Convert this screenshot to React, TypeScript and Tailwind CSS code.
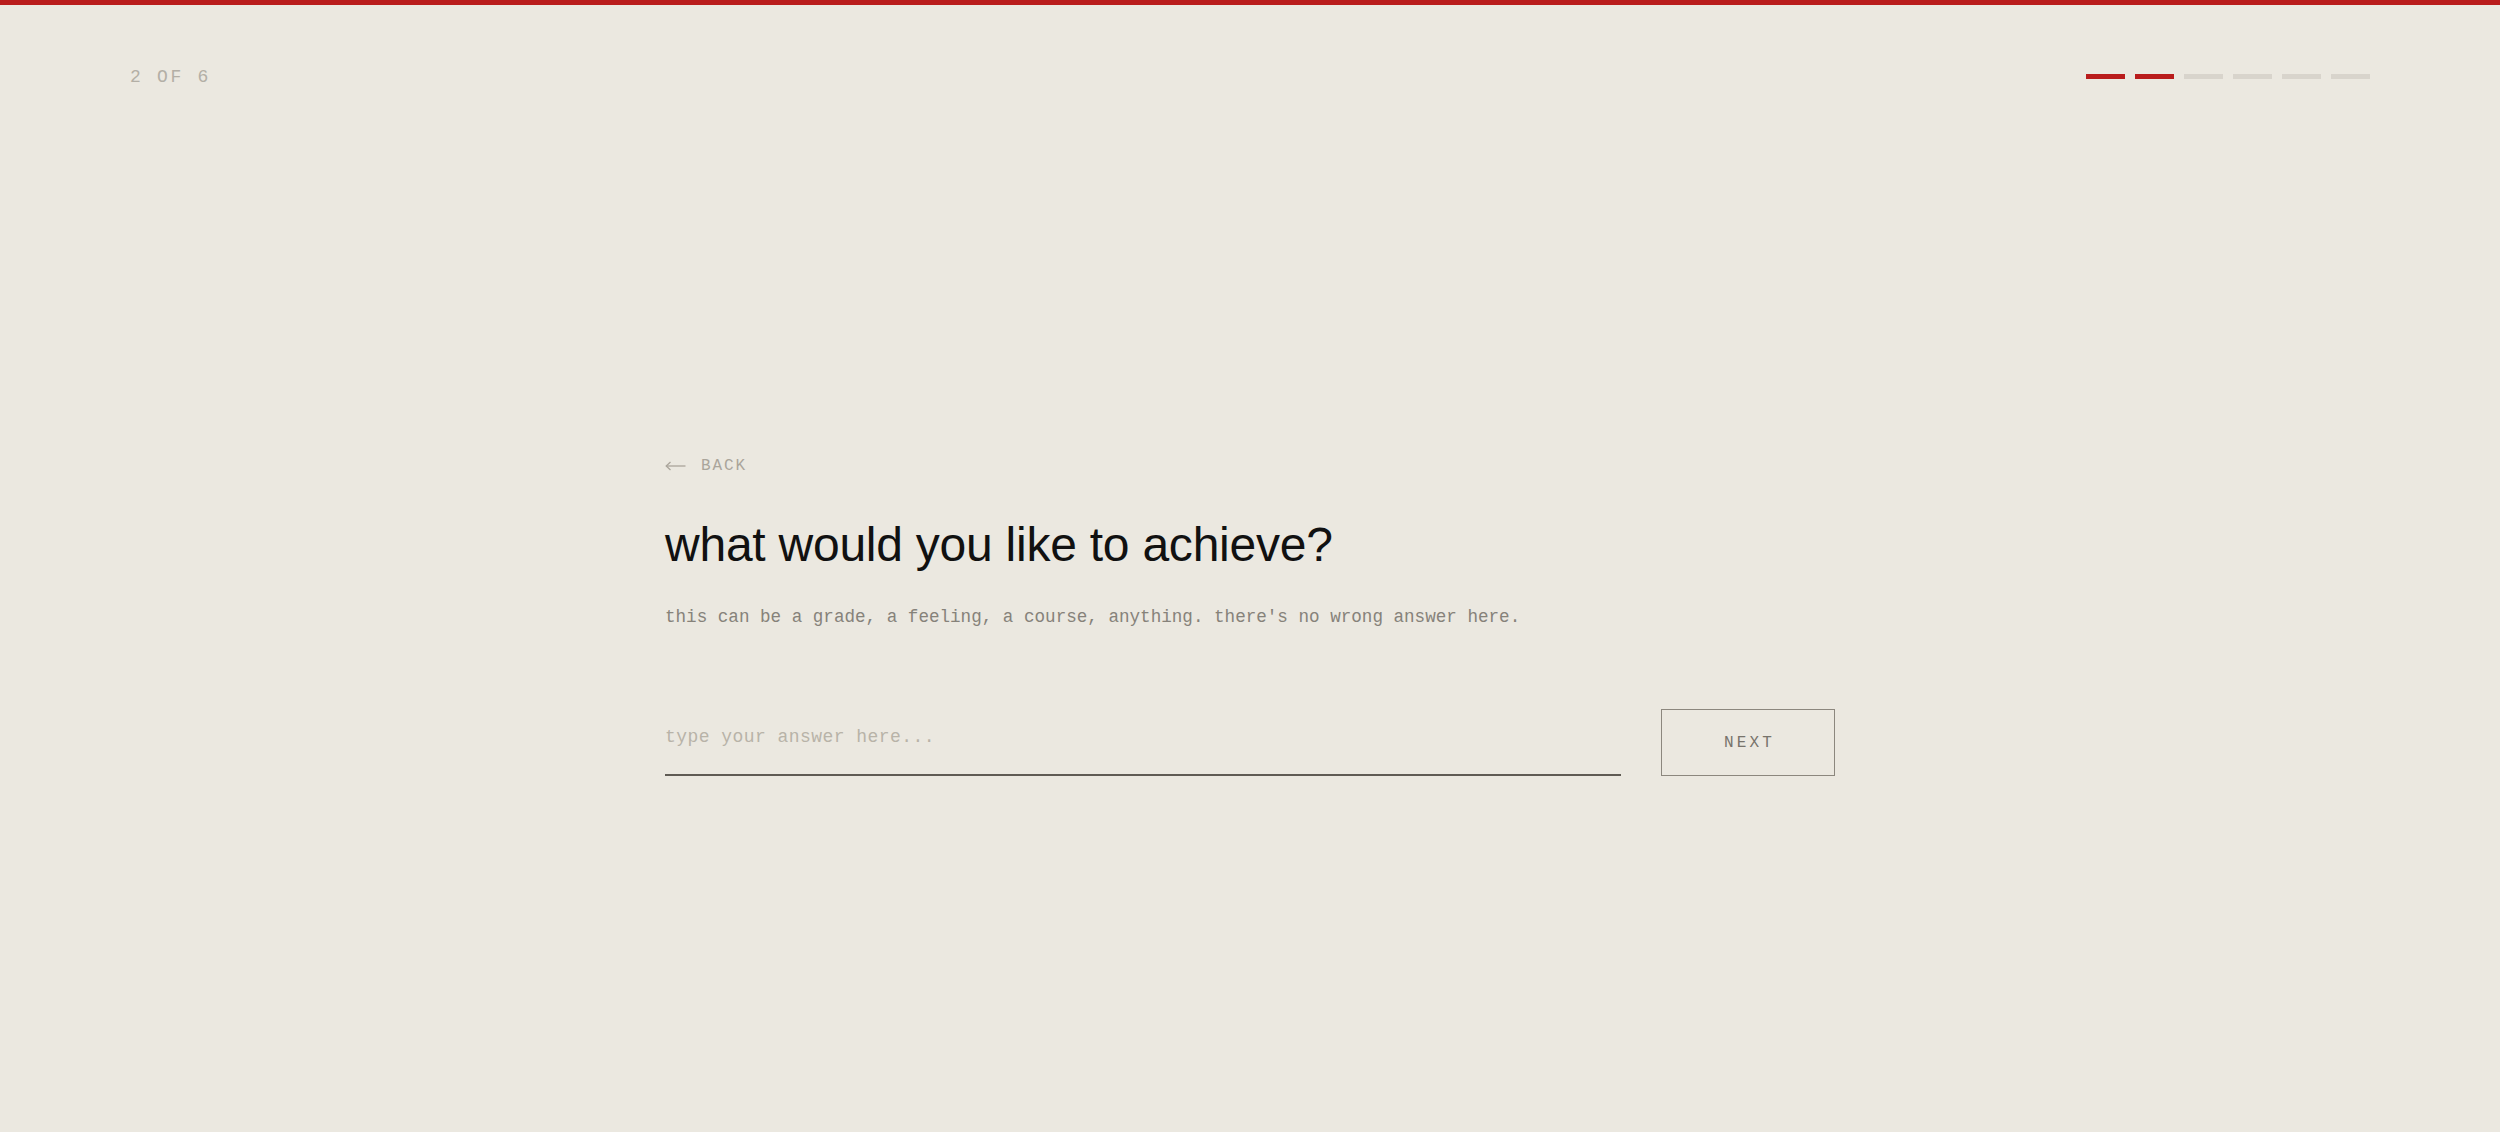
import React from "react";

const mono = { fontFamily: '"Liberation Mono", "DejaVu Sans Mono", monospace' };

function Progress({ step, total }: { step: number; total: number }) {
    return (
        <div className="flex items-center gap-[10px]">
            {Array.from({ length: total }).map((_, i) => (
                <div
                    key={i}
                    className={i < step ? "w-[39px] h-[5px] bg-[#b91c1c]" : "w-[39px] h-[5px] bg-[#d8d4cc]"}
                />
            ))}
        </div>
    );
}

function BackArrow() {
    return (
        <svg width="21" height="10" viewBox="0 0 21 10" fill="none" stroke="#aaa59b" strokeWidth="1.3">
            <path d="M20.5 5H1.5" />
            <path d="M5.5 1L1.2 5L5.5 9" />
        </svg>
    );
}

export default function App() {
    return (
        <div className="min-h-screen w-full flex flex-col bg-[#ebe8e0] font-['Liberation_Sans',Arial,sans-serif]">
            <div className="h-[5px] w-full bg-[#b91c1c]" />

            <header className="h-[142px] flex items-center justify-between px-[130px]">
                <span className="text-[18px] tracking-[0.15em] text-[#b3afa6] pt-[2px]" style={mono}>
                    2 OF 6
                </span>
                <Progress step={2} total={6} />
            </header>

            <main className="flex justify-center pt-[307px]">
                <div className="w-[1170px] flex flex-col">
                    <button className="flex items-center gap-[15px] h-[24px] self-start text-[16px] tracking-[0.12em] text-[#aaa59b]" style={mono}>
                        <BackArrow />
                        BACK
                    </button>

                    <h1 className="mt-[38px] text-[48px] leading-[1.2] tracking-[-0.005em] text-[#111111]">
                        what would you like to achieve?
                    </h1>

                    <p className="mt-[29px] text-[17.6px] leading-[28px] text-[#86827a]" style={mono}>
                        this can be a grade, a feeling, a course, anything. there's no wrong answer here.
                    </p>

                    <div className="mt-[78px] flex items-end gap-[40px]">
                        <input
                            type="text"
                            placeholder="type your answer here..."
                            className="flex-1 h-[66px] bg-transparent border-b-2 border-[#5f5b54] outline-none text-[18px] tracking-[0.025em] text-[#333] placeholder:text-[#b8b3a8] pb-[9px]"
                            style={mono}
                        />
                        <button
                            className="w-[174px] h-[67px] border border-[#8c877e] flex items-center justify-center text-[16px] tracking-[0.2em] text-[#77736b] pl-[3px] pt-[2px]"
                            style={mono}
                        >
                            NEXT
                        </button>
                    </div>
                </div>
            </main>
        </div>
    );
}
